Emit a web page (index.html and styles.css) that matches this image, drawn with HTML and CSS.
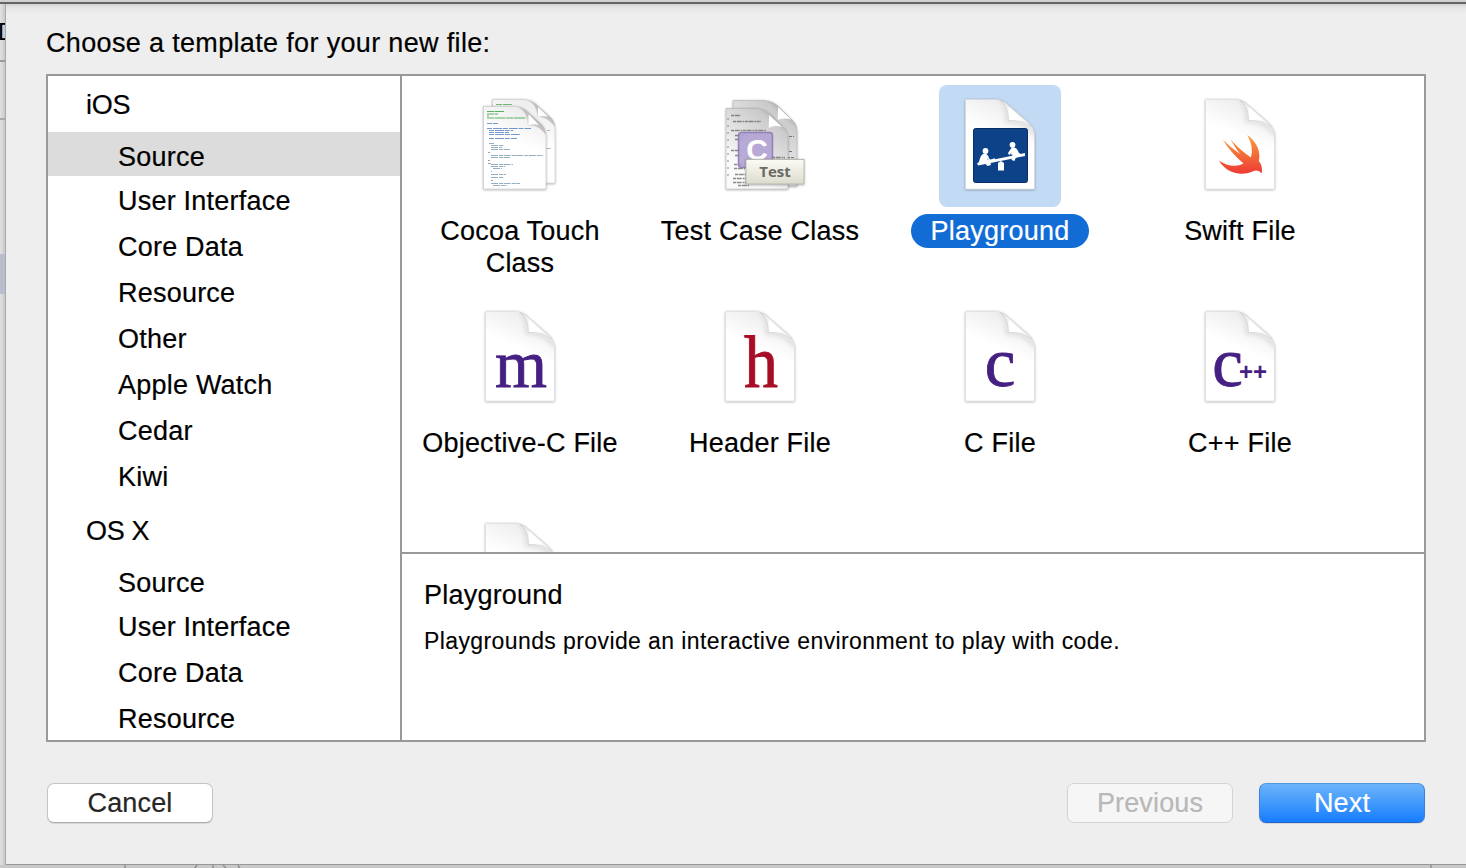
FILE: index.html
```html
<!DOCTYPE html>
<html lang="en">
<head>
<meta charset="utf-8">
<title>New File</title>
<link rel="stylesheet" href="styles.css">
</head>
<body>
<svg class="defs" width="0" height="0" aria-hidden="true">
  <defs>
    <linearGradient id="paper" x1="0.25" y1="1" x2="0.6" y2="0">
      <stop offset="0.6" stop-color="#fff"/><stop offset="1" stop-color="#ebebeb"/>
    </linearGradient>
    <linearGradient id="fold" x1="0" y1="1" x2="0.7" y2="0.3">
      <stop offset="0" stop-color="#fff"/><stop offset="0.6" stop-color="#fafafa"/><stop offset="1" stop-color="#dedede"/>
    </linearGradient>
    <linearGradient id="curl" x1="0" y1="1" x2="0.7" y2="0.3">
      <stop offset="0" stop-color="#fff"/><stop offset="0.35" stop-color="#f4f4f4"/><stop offset="1" stop-color="#a8a8a8"/>
    </linearGradient>
    <linearGradient id="grey" x1="0" y1="1" x2="0.6" y2="0">
      <stop offset="0.3" stop-color="#fafafa"/><stop offset="1" stop-color="#c6c6c6"/>
    </linearGradient>
    <linearGradient id="bird" x1="0" y1="0" x2="0" y2="1">
      <stop offset="0" stop-color="#f9a13c"/><stop offset="1" stop-color="#ee3a35"/>
    </linearGradient>
    <linearGradient id="tag" x1="0" y1="0" x2="0" y2="1">
      <stop offset="0" stop-color="#fbfbf6"/><stop offset="1" stop-color="#dcdccd"/>
    </linearGradient>
    <filter id="soft" x="-20%" y="-20%" width="140%" height="140%">
      <feDropShadow dx="0" dy="0.6" stdDeviation="0.8" flood-color="#000" flood-opacity="0.38"/>
    </filter>
    <filter id="blur"><feGaussianBlur stdDeviation="2"/></filter>
    <clipPath id="docclip"><path d="M26.500 14.500H56C62 14.500 66 17 69 20L88 36.500C93 41 95.500 45 95.500 51V104H26.500Z"/></clipPath>
    <g id="doc">
      <path d="M26.500 14.500H56C62 14.500 66 17 69 20L88 36.500C93 41 95.500 45 95.500 51V104H26.500Z" fill="url(#paper)" stroke="#d4d4d4" stroke-width=".5" filter="url(#soft)"/>
      <g clip-path="url(#docclip)"><path d="M62 14Q69 21 68 36Q86 35 96 50" fill="none" stroke="#bbb" stroke-width="3" opacity=".5" filter="url(#blur)"/></g>
      <path d="M61 15.500Q69.500 20 69.500 35.500Q82 34.500 93 42L88 36.500L69 20Q66 17 61 15.500Z" fill="url(#fold)" stroke="#cdcdcd" stroke-width=".6"/>
      <path d="M70 22V35Q77 34 84.500 35.500Z" fill="#fff"/>
    </g>
  </defs>
</svg>
<div class="window">
  <div class="titlebar"></div>
  <div class="middle">
    <div class="behind">
      <div class="tab">D</div><div class="bar"></div><div class="area"></div><div class="mark"></div>
    </div>
    <main class="sheet">
      <h1 class="prompt">Choose a template for your new file:</h1>
      <div class="chooser">
        <nav class="sidebar">
          <div class="group">iOS</div>
          <div class="entry first selected">Source</div>
          <div class="entry">User Interface</div>
          <div class="entry">Core Data</div>
          <div class="entry">Resource</div>
          <div class="entry">Other</div>
          <div class="entry">Apple Watch</div>
          <div class="entry">Cedar</div>
          <div class="entry">Kiwi</div>
          <div class="group next">OS X</div>
          <div class="entry first">Source</div>
          <div class="entry">User Interface</div>
          <div class="entry">Core Data</div>
          <div class="entry">Resource</div>
        </nav>
        <section class="content">
          <div class="templates">
            <div class="template">
              <svg class="tile" viewBox="0 0 122 122">
                <g filter="url(#soft)"><path d="M33.500 14.500H65Q74 15 79 21L91 32Q96 37 96 45V98H33.500Z" fill="url(#paper)" stroke="#c8c8c8" stroke-width=".6"/></g>
                <path d="M67 15Q78 18 78 32Q88 31 96 42Q96 36 91 32L79 21Q74 16 67 15Z" fill="url(#curl)"/>
                <path d="M79 22V31.500Q84 30.500 89 31.500Z" fill="#fff"/>
                <path d="M37 19.500H53M37 22.500H50M48 28.500H66" stroke="#4fa755" stroke-width="1" stroke-dasharray="6 .8 9 .5" opacity=".8"/>
                <path d="M88 45.500H91M86 63.500H92" stroke="#999" stroke-width=".7"/>
                <g filter="url(#soft)"><path d="M24.500 21.500H56Q65 22 70 28L82 39Q87 44 87 52V104H24.500Z" fill="url(#paper)" stroke="#c4c4c4" stroke-width=".6"/></g>
                <path d="M58 22Q69 26 68.500 41Q79 39 87 50Q87 44 82 39L70 28Q65 23 58 22Z" fill="url(#curl)"/>
                <path d="M69.500 29V40.500Q74 38.500 80 40Z" fill="#fff"/>
                <g fill="none" stroke-width="1.200" opacity=".8">
                  <path d="M28 26.500H45M28 29H39M28 31H30M28 33H67" stroke="#35a03c" stroke-dasharray="7 .6 11 .6"/>
                  <path d="M28 38.500H39M28 43.500H72M30 45.500H54M30 47.500H50M30 49.500H61M30 53.500H58" stroke="#5580bd" stroke-dasharray="5 1 9 .8"/>
                  <path d="M30 58.500H35M32 60.500H45M32 62.500H43M32 64.500H51M32 70.500H84M32 72.500H51M32 79.500H54M32 81.500H46M34 83.500H43M32 89.500H47M32 92.500H44M32 98.500H61M34 100.500H48" stroke="#7b9cb1" stroke-width="1" stroke-dasharray="7 1 4 .6"/>
                  <path d="M29 67.500H31M29 75.500H31M29 78.500H32M32 86.500H33M32 95.500H34" stroke="#888"/>
                </g>
              </svg>
              <div class="label">Cocoa Touch<br>Class</div>
            </div>
            <div class="template">
              <svg class="tile" viewBox="0 0 122 122">
                <g filter="url(#soft)"><path d="M34 15.500H65Q74 16 80 22L92 34Q98 39 98 47V101H34Z" fill="url(#grey)" stroke="#aaa" stroke-width=".5"/></g>
                <path d="M65 16Q78 20 78 35Q90 34 98 45Q98 38 92 34L80 22Q74 16 65 16Z" fill="url(#curl)"/>
                <path d="M79 22V34.500Q85 32.500 92 34.500Z" fill="#fff"/>
                <path d="M86 51.500H95M86 66.500H94M88 72.500H95" stroke="#777" stroke-width="1.200" stroke-dasharray="3 1"/>
                <g filter="url(#soft)"><path d="M27 23.500H58Q66 24 72 30L84 42Q89 46 89 54V104H27Z" fill="url(#grey)" stroke="#aaa" stroke-width=".5"/></g>
                <path d="M58 24Q70 28 69.500 43Q80 40 89 51Q89 46 84 42L72 30Q66 24 58 24Z" fill="url(#curl)"/>
                <path d="M70 30V42.500Q76 40 83 42Z" fill="#fff"/>
                <g stroke="#666" fill="none" stroke-width="1.300" opacity=".75">
                  <path d="M32 30.500H42M34 36.500H62M32 45.500H67M36 50.500H49M36 54.500H44M32 65.500H42M36 70.500H42M35 79.500H48M35 83.500H46M36 89.500H49M34 93.500H48M34 97.500H50M39 100.500H50M73 72.500H86" stroke-dasharray="3 .7 5 1 1.500 .6"/>
                  <path d="M29 33V95" stroke-width="1" stroke-dasharray="2 5"/>
                </g>
                <rect x="39.500" y="47.500" width="34" height="35" rx="3" fill="#b3a3d4" stroke="#8a76b5" stroke-width="1.500" opacity=".9"/>
                <text x="58" y="75" class="badge-c">C</text>
                <rect x="47" y="74.500" width="58" height="24.500" fill="url(#tag)" stroke="#aaa99e" stroke-width=".7" filter="url(#soft)"/>
                <text x="76" y="91.500" class="badge-test">Test</text>
              </svg>
              <div class="label">Test Case Class</div>
            </div>
            <div class="template active">
              <svg class="tile" viewBox="0 0 122 122">
                <use href="#doc"/>
                <rect x="34.500" y="43.500" width="54" height="54" rx="2" fill="#0d4188" stroke="#082e64"/>
                <g fill="#fff" stroke="none">
                  <circle cx="46.500" cy="66" r="2.900"/><circle cx="73.500" cy="59.800" r="2.900"/>
                  <path d="M38 78L86 68V71L39 80.500Z"/>
                  <path d="M39.500 78L41.500 72Q44 67 47.500 69L50 72L48 74L51 76L52 80L48.500 81L46 78.500L39 80Z"/>
                  <path d="M73 62Q78 62 80 68L84 70L77 72L75.500 76L72.500 75L73.500 70L71.500 69L73 66L70 69.500L69 68Z"/>
                  <path d="M59 78L62 76L65 78V85.500H59Z"/>
                </g>
                <path d="M47 71L51 75.500L56 74M73 65L70 69.500" fill="none" stroke="#fff" stroke-width="1.500"/>
              </svg>
              <div class="label">Playground</div>
            </div>
            <div class="template">
              <svg class="tile" viewBox="0 0 122 122">
                <use href="#doc"/>
                <path d="M68.300 50C78 57 82 67 79.800 76Q84 81 82.700 88.500Q79 83.500 73.500 86.500C61 92 46 87 40 75.500C48 81 57 82.500 64.500 78.500Q52 68 43.700 54.500Q52 63 61 69Q55 61 51.500 54.500Q62 66 72 72.500Q75 62 68.300 50Z" fill="url(#bird)"/>
              </svg>
              <div class="label">Swift File</div>
            </div>
            <div class="template">
              <svg class="tile" viewBox="0 0 122 122"><use href="#doc"/><text x="62" y="89.500" class="letter" textLength="52" lengthAdjust="spacingAndGlyphs">m</text></svg>
              <div class="label">Objective-C File</div>
            </div>
            <div class="template">
              <svg class="tile" viewBox="0 0 122 122"><use href="#doc"/><text x="62" y="89.500" class="letter header" textLength="34" lengthAdjust="spacingAndGlyphs">h</text></svg>
              <div class="label">Header File</div>
            </div>
            <div class="template">
              <svg class="tile" viewBox="0 0 122 122"><use href="#doc"/><text x="61" y="89" class="letter c">c</text></svg>
              <div class="label">C File</div>
            </div>
            <div class="template">
              <svg class="tile" viewBox="0 0 122 122"><use href="#doc"/><text x="48.500" y="89" class="letter c">c</text><text x="74" y="83" class="plus">++</text></svg>
              <div class="label">C++ File</div>
            </div>
            <div class="template">
              <svg class="tile" viewBox="0 0 122 122"><use href="#doc"/></svg>
            </div>
          </div>
          <div class="details">
            <h2 class="name">Playground</h2>
            <p class="summary">Playgrounds provide an interactive environment to play with code.</p>
          </div>
        </section>
      </div>
      <div class="actions">
        <button class="button cancel">Cancel</button>
        <button class="button previous" disabled>Previous</button>
        <button class="button primary">Next</button>
      </div>
    </main>
  </div>
  <div class="footer">
    <svg class="peek" viewBox="0 0 1466 4"><path d="M125 0V4M1431 0V4M197 0L194 4M213 0V4M223 0L227 4M238 0L240 4" stroke="#888" stroke-width="1.300" fill="none"/></svg>
  </div>
</div>
</body>
</html>
```
FILE: styles.css
```css
* { box-sizing: border-box; }
body {
  margin: 0;
  overflow: hidden;
  font-family: "Liberation Sans", Arial, sans-serif;
  font-size: 27px;
  letter-spacing: 0.22px;
  -webkit-text-stroke: 0.2px;
  color: #000;
}
h1, h2, p { margin: 0; font-weight: normal; }
.defs { position: absolute; }
.window { display: flex; flex-direction: column; width: 1466px; height: 868px; }
.titlebar { height: 4px; background: #d0d0d0; border-bottom: 2px solid #646466; }
.middle { display: flex; height: 861px; }
.behind { width: 6px; overflow: hidden; background: linear-gradient(90deg, #e2e2e2, #c9c9c9); border-right: 1px solid #a9a9a9; }
.tab { height: 58px; padding-top: 14px; border-bottom: 2px solid #999; line-height: 28px; font-size: 23px; text-indent: -2px; }
.bar { height: 58px; border-bottom: 2px solid #aaa; }
.area { height: 134px; }
.mark { height: 40px; background: #b9bdcc; }
.sheet {
  flex: 1;
  padding: 20px 40px 0;
  background: linear-gradient(#d2d2d2, #e7e7e7 4px, #eee 10px);
  border-bottom: 1px solid #989898;
}
.prompt { height: 50px; line-height: 38px; font-size: 27px; letter-spacing: 0.34px; }
.chooser { display: flex; width: 1380px; height: 668px; background: #fff; border: 2px solid #999; }
.sidebar { width: 354px; height: 664px; overflow: hidden; border-right: 2px solid #999; }
.group { height: 56px; padding-left: 38px; line-height: 58px; letter-spacing: -0.3px; }
.group.next { height: 60px; line-height: 66px; }
.entry { height: 46px; padding-left: 70px; line-height: 50px; }
.entry.first { height: 44px; }
.entry.selected { background: #dcdcdc; }
.content { flex: 1; }
.templates {
  display: grid;
  grid-template-columns: repeat(4, 236px);
  grid-auto-rows: 212px;
  column-gap: 4px;
  height: 478px;
  overflow: hidden;
  border-bottom: 2px solid #999;
}
.template { display: flex; flex-direction: column; align-items: center; padding-top: 9px; text-align: center; }
.tile { display: block; flex: none; width: 122px; height: 122px; border-radius: 8px; -webkit-text-stroke: 0; }
.label { margin-top: 7px; padding: 1px 20px; border-radius: 17px; line-height: 32px; white-space: nowrap; }
.active .tile { background: #c3daf5; }
.active .label { background: #116cd6; color: #fff; }
.letter { font-family: "Liberation Serif", serif; font-size: 67px; letter-spacing: 0; text-anchor: middle; fill: #452082; stroke: #452082; stroke-width: 0.8px; }
.header { font-size: 73px; fill: #a70d26; stroke: #a70d26; }
.c { font-size: 69px; }
.plus { font-family: "Liberation Sans", sans-serif; font-weight: bold; font-size: 24px; letter-spacing: 0; text-anchor: middle; fill: #452082; }
.badge-c { font-size: 30px; font-weight: bold; letter-spacing: 0; text-anchor: middle; fill: #fff; }
.badge-test { font-family: "Open Sans", sans-serif; font-size: 15px; font-weight: bold; letter-spacing: 0; text-anchor: middle; fill: #6a6a64; }
.details { padding: 24px 22px; }
.name { font-size: 27px; line-height: 34px; }
.summary { padding-top: 14px; font-size: 23px; line-height: 30px; letter-spacing: 0.4px; -webkit-text-stroke: 0.1px; }
.actions { display: flex; padding: 41px 0 0 1px; }
.button {
  width: 166px;
  height: 40px;
  padding: 0;
  border: 1px solid #c4c4c4;
  border-bottom-color: #adadad;
  border-radius: 7px;
  background: #fff;
  box-shadow: 0 1px 1px rgba(0, 0, 0, 0.1);
  font: 27px "Liberation Sans", Arial, sans-serif;
  letter-spacing: 0.15px;
  -webkit-text-stroke: 0.2px;
  color: #262626;
}
.previous { margin-left: auto; border-color: #d3d3d3; background: #f6f6f6; color: #b8b8b8; box-shadow: none; }
.primary {
  margin: 0 1px 0 26px;
  border-color: #5099df #3980df #2466cf;
  background: linear-gradient(#6cb3fa, #3e97fb 55%, #167dff);
  color: #fff;
}
.footer { height: 3px; background: #c9c9c9; }
.peek { display: block; width: 1466px; height: 4px; }
```
